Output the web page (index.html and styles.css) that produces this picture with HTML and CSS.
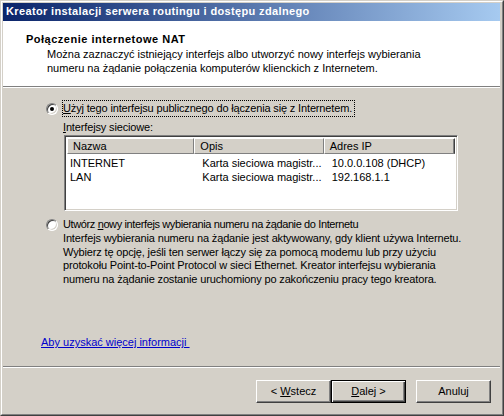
FILE: index.html
```html
<!DOCTYPE html>
<html lang="pl">
<head>
<meta charset="utf-8">
<title>Kreator instalacji serwera routingu i dostępu zdalnego</title>
<link rel="stylesheet" href="styles.css">
</head>
<body>
<div class="window">
  <div class="frame">
    <div class="titlebar">Kreator instalacji serwera routingu i dostępu zdalnego</div>
    <div class="header">
      <div class="h-title">Połączenie internetowe NAT</div>
      <div class="h-desc">Można zaznaczyć istniejący interfejs albo utworzyć nowy interfejs wybierania<br>numeru na żądanie połączenia komputerów klienckich z Internetem.</div>
    </div>
    <div class="sep"></div>
    <div class="body">
      <div class="opt">
        <span class="radio checked"></span>
        <span class="label focus"><u>U</u>żyj tego interfejsu publicznego do łączenia się z Internetem.</span>
      </div>
      <div class="sub">
        <div class="caption"><u>I</u>nterfejsy sieciowe:</div>
        <div class="listbox">
          <div class="lh">
            <div class="hc c1">Nazwa</div>
            <div class="hc c2">Opis</div>
            <div class="hc c3">Adres IP</div>
          </div>
          <div class="lr">
            <div class="rc c1">INTERNET</div>
            <div class="rc c2">Karta sieciowa magistr...</div>
            <div class="rc c3">10.0.0.108 (DHCP)</div>
          </div>
          <div class="lr">
            <div class="rc c1">LAN</div>
            <div class="rc c2">Karta sieciowa magistr...</div>
            <div class="rc c3">192.168.1.1</div>
          </div>
        </div>
      </div>
      <div class="opt opt2">
        <span class="radio"></span>
        <span class="label">Utwórz <u>n</u>owy interfejs wybierania numeru na żądanie do Internetu</span>
      </div>
      <div class="para">Interfejs wybierania numeru na żądanie jest aktywowany, gdy klient używa Internetu.<br>Wybierz tę opcję, jeśli ten serwer łączy się za pomocą modemu lub przy użyciu<br>protokołu Point-to-Point Protocol w sieci Ethernet. Kreator interfejsu wybierania<br>numeru na żądanie zostanie uruchomiony po zakończeniu pracy tego kreatora.</div>
      <a class="link" href="#">Aby uzyskać więcej informacji&nbsp;</a>
    </div>
    <div class="sep"></div>
    <div class="buttons">
      <div class="btn"><span>&lt; <u>W</u>stecz</span></div>
      <div class="btn default"><span><u>D</u>alej &gt;</span></div>
      <div class="btn cancel"><span>Anuluj</span></div>
    </div>
  </div>
</div>
</body>
</html>
```
FILE: styles.css
```css
html, body {
  margin: 0;
  padding: 0;
  background: #d4d0c8;
}
.window {
  width: 504px;
  height: 416px;
  box-sizing: border-box;
  border: 1px solid;
  border-color: #d4d0c8 #404040 #404040 #d4d0c8;
  font-family: "Liberation Sans", Arial, sans-serif;
  font-size: 11px;
  color: #000;
  overflow: hidden;
}
.frame {
  height: 100%;
  box-sizing: border-box;
  border: 1px solid;
  border-color: #ffffff #808080 #808080 #ffffff;
  padding: 1px 2px 2px 1px;
  display: flex;
  flex-direction: column;
  background: #d4d0c8;
}
.titlebar {
  height: 18px;
  line-height: 17px;
  flex: none;
  background: linear-gradient(to right, #0a246a, #a6caf0);
  color: #fff;
  font-weight: bold;
  letter-spacing: 0.36px;
  padding-left: 3px;
  white-space: nowrap;
}
.header {
  flex: none;
  height: 65px;
  box-sizing: border-box;
  background: #fff;
  padding: 11px 0 0 23px;
}
.h-title {
  font-weight: bold;
  line-height: 15px;
  letter-spacing: 0.5px;
}
.h-desc {
  line-height: 14px;
  padding-left: 21px;
}
.sep {
  flex: none;
  height: 1px;
  border-top: 1px solid #808080;
  background: #fff;
}
.body {
  flex: 1;
  display: flex;
  flex-direction: column;
  padding: 12px 0 0 43px;
  min-height: 0;
  letter-spacing: -0.15px;
}
.opt {
  display: flex;
  align-items: center;
  height: 17px;
}
.radio {
  width: 12px;
  height: 12px;
  box-sizing: border-box;
  border-radius: 50%;
  border: 1px solid;
  border-color: #808080 #ffffff #ffffff #808080;
  box-shadow: inset 1px 1px 0 #404040, inset -1px -1px 0 #d4d0c8;
  background: #fff;
  position: relative;
  flex: none;
  margin-right: 4px;
}
.radio.checked::after {
  content: "";
  position: absolute;
  left: 3px;
  top: 3px;
  width: 4px;
  height: 4px;
  border-radius: 50%;
  background: #000;
}
.label {
  border: 1px dotted transparent;
  line-height: 15px;
  padding: 0 2px 0 0;
  white-space: nowrap;
}
.label.focus {
  border-color: #000;
}
.opt2 .label {
  letter-spacing: -0.38px;
}
.sub {
  padding-left: 17px;
  margin-top: 3px;
}
.caption {
  line-height: 14px;
  height: 15px;
}
.listbox {
  width: 394px;
  height: 76px;
  margin-left: 1px;
  box-sizing: border-box;
  border: 1px solid;
  border-color: #808080 #ffffff #ffffff #808080;
  box-shadow: inset 1px 1px 0 #404040, inset -1px -1px 0 #d4d0c8;
  background: #fff;
  padding: 2px;
  letter-spacing: 0;
}
.lh {
  display: flex;
  height: 16px;
}
.hc {
  box-sizing: border-box;
  height: 16px;
  line-height: 14px;
  background: #d4d0c8;
  border-top: 1px solid #fff;
  border-left: 1px solid #fff;
  border-bottom: 1px solid #808080;
  border-right: 1px solid #808080;
  padding-left: 5px;
  white-space: nowrap;
}
.hc.c3 {
  border-right-color: #404040;
  box-shadow: inset -1px 0 0 #808080;
}
.c1 { width: 128px; }
.c2 { width: 130px; }
.c3 { width: 132px; }
.lr {
  display: flex;
  height: 14px;
  line-height: 14px;
}
.lh + .lr {
  margin-top: 2px;
}
.rc {
  box-sizing: border-box;
  padding-left: 3px;
  white-space: nowrap;
}
.rc.c2, .rc.c3 {
  padding-left: 8px;
}
.opt2 {
  margin-top: 5px;
}
.para {
  padding-left: 17px;
  line-height: 13.6px;
  margin-top: -1px;
  white-space: nowrap;
}
.link {
  margin-top: auto;
  margin-bottom: 17px;
  margin-left: -5px;
  line-height: 14px;
  color: #0000cc;
  text-decoration: underline;
  align-self: flex-start;
  letter-spacing: 0;
}
.buttons {
  flex: none;
  display: flex;
  justify-content: flex-end;
  padding: 12px 9px 0 0;
  height: 44px;
  box-sizing: border-box;
}
.btn {
  width: 75px;
  height: 23px;
  box-sizing: border-box;
  background: #d4d0c8;
  border: 1px solid;
  border-color: #ffffff #404040 #404040 #ffffff;
  box-shadow: inset -1px -1px 0 #808080;
  display: flex;
  align-items: center;
  justify-content: center;
  line-height: 13px;
}
.btn.default {
  border: 1px solid #000;
  box-shadow: inset 1px 1px 0 #ffffff, inset -1px -1px 0 #404040, inset -2px -2px 0 #808080;
}
.btn.cancel {
  margin-left: 10px;
}
```
